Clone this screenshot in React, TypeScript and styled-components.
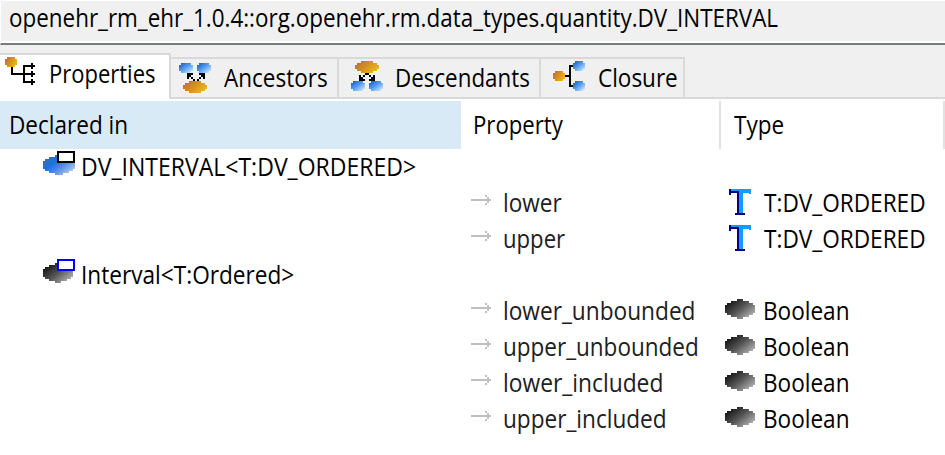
import React from "react";
import styled, { createGlobalStyle } from "styled-components";

const GlobalStyle = createGlobalStyle`
  *, *::before, *::after { box-sizing: border-box; }
  body { margin: 0; background: #fff; overflow: hidden; }
`;

const Window = styled.div`
  display: flex;
  flex-direction: column;
  width: 945px;
  height: 455px;
  background: #fff;
  color: #000;
  font: 25px/36px "Open Sans", "Noto Sans", sans-serif;
`;

/* Condensed label: the face is narrowed horizontally by $fit. */
const Label = styled.span<{ $fit: number }>`
  display: block;
  width: 0;
  white-space: pre;
  transform: scaleX(${(p) => p.$fit});
  transform-origin: left center;
`;

const TitleBar = styled.header`
  height: 45px;
  flex: none;
  padding: 0 0 0 8px;
  border-top: 1px solid #fff;
  border-left: 1px solid #fff;
  border-bottom: 2px solid #787c78;
  background: linear-gradient(#f0f0f0 40px, #fff 40px);
  line-height: 33px;
`;

const TabBar = styled.nav`
  display: flex;
  align-items: flex-end;
  flex: none;
  height: 54px;
  background: #f0f0f0;
  line-height: 33px;
`;

const ActiveTab = styled.div`
  display: flex;
  width: 171px;
  height: 46px;
  padding: 2px 0 0 5px;
  gap: 12px;
  background: #fff;
  border-top: 2px solid #d9d9d9;
  border-right: 2px solid #d9d9d9;
`;

const Tab = styled.div<{ $width: number; $gap: number; $pad: number }>`
  display: flex;
  width: ${(p) => p.$width}px;
  height: 42px;
  padding: 2px 0 0 ${(p) => p.$pad}px;
  gap: ${(p) => p.$gap}px;
  border: solid #d9d9d9;
  border-width: 2px 2px 2px 0;
`;

const TabFill = styled.div`
  flex: 1;
  height: 2px;
  background: #d9d9d9;
`;

const Table = styled.main`
  display: flex;
  flex-direction: column;
  padding-top: 2px;
`;

const Columns = styled.div`
  display: grid;
  grid-template-columns: 461px 260px 224px;
`;

const HeaderRow = styled(Columns)`
  height: 48px;
`;

const HeaderCell = styled.div<{ $active?: boolean; $pad: number; $line?: boolean }>`
  padding: 5px 0 0 ${(p) => p.$pad}px;
  background: ${(p) => (p.$active ? "#d9eaf7" : "#fff")};
  border-right: ${(p) => (p.$line ? "2px solid #e2e2e2" : "0")};
`;

const Row = styled(Columns)`
  height: 36px;
`;

const Cell = styled.div<{ $pad: number; $gap: number; $soft?: boolean }>`
  display: flex;
  height: 36px;
  padding-left: ${(p) => p.$pad}px;
  gap: ${(p) => p.$gap}px;
  color: ${(p) => (p.$soft ? "#202020" : "#000")};
  line-height: 34px;
`;

const Icon = styled.svg`
  display: block;
  flex: none;
  shape-rendering: crispEdges;
`;

type Tone = "amber" | "sky" | "ink" | "cobalt";

const Gradients = () => (
  <Icon width="0" height="0">
    <defs>
      <linearGradient id="amber" x1="0" y1="0" x2="1" y2="0.5">
        <stop offset="0" stopColor="#b9672b" />
        <stop offset="1" stopColor="#e9b41c" />
      </linearGradient>
      <linearGradient id="sky" x1="0" y1="0" x2="1" y2="1">
        <stop offset="0.1" stopColor="#1c62cc" />
        <stop offset="0.5" stopColor="#5ba0ee" />
        <stop offset="1" stopColor="#e2f4ff" />
      </linearGradient>
      <linearGradient id="ink" x1="0" y1="0.1" x2="1" y2="0.9">
        <stop offset="0.1" stopColor="#161616" />
        <stop offset="0.5" stopColor="#555" />
        <stop offset="1" stopColor="#c4c4c4" />
      </linearGradient>
      <linearGradient id="cobalt" x1="0" y1="0.1" x2="1" y2="0.9">
        <stop offset="0" stopColor="#3c6ca8" />
        <stop offset="0.35" stopColor="#1872e8" />
        <stop offset="0.55" stopColor="#4787df" />
        <stop offset="1" stopColor="#c9d7ef" />
      </linearGradient>
    </defs>
  </Icon>
);

/* Stepped ellipse; insets give the indent of every 2px row. */
const Blob = ({ x, y, w, insets, tone }: { x: number; y: number; w: number; insets: number[]; tone: Tone }) => {
  const left = insets.map((n, i) => `${x + n * 2},${y + i * 2} ${x + n * 2},${y + i * 2 + 2}`);
  const right = insets.map((n, i) => `${x + w - n * 2},${y + i * 2 + 2} ${x + w - n * 2},${y + i * 2}`).reverse();
  return <polygon points={[...left, ...right].join(" ")} fill={`url(#${tone})`} />;
};

const DOT = [1, 0, 0, 0, 1];
const OVAL = [3, 1, 0, 0, 1, 3];
const DISC = [6, 3, 1, 0, 0, 0, 0, 1, 3, 6];

const PropertiesIcon = () => (
  <Icon width="32" height="32">
    <path d="M6 10h2v6h10V8h8V6h2v2h2v2h-2v2h-2v-2h-6v6h6v-2h2v2h2v2h-2v2h-2v-2h-6v6h6v-2h2v2h2v2h-2v2h-2v-2h-8v-8H6z" />
    <Blob x={0} y={0} w={12} insets={DOT} tone="amber" />
  </Icon>
);

const AncestorsIcon = () => (
  <Icon width="32" height="34">
    <path d="M8 12h6v2h-2v2h2v2h2v2h2v-2h2v-2h2v-2h-2v-2h6v6h-2v-2h-2v2h-2v2h-6v-2h-2v-2h-2v2H8z" />
    <Blob x={0} y={2} w={14} insets={DOT} tone="sky" />
    <Blob x={18} y={2} w={14} insets={DOT} tone="sky" />
    <Blob x={4} y={20} w={24} insets={OVAL} tone="amber" />
  </Icon>
);

const DescendantsIcon = () => (
  <Icon width="32" height="34">
    <path d="M14 12h4v2h2v2h2v-2h2v6h-6v-2h2v-2h-2v-2h-4v2h-2v2h2v2H8v-6h2v2h2v-2h2z" />
    <Blob x={4} y={0} w={24} insets={OVAL} tone="amber" />
    <Blob x={0} y={20} w={14} insets={DOT} tone="sky" />
    <Blob x={18} y={20} w={14} insets={DOT} tone="sky" />
  </Icon>
);

const ClosureIcon = () => (
  <Icon width="32" height="34">
    <path d="M12 14h4V4h4v2h-2v18h2v2h-4V16h-4z" />
    <Blob x={0} y={10} w={12} insets={DOT} tone="amber" />
    <Blob x={20} y={0} w={12} insets={DOT} tone="sky" />
    <Blob x={20} y={20} w={12} insets={DOT} tone="sky" />
  </Icon>
);

const ClassIcon = ({ tone, frame }: { tone: Tone; frame: string }) => (
  <Icon width="32" height="28">
    <Blob x={0} y={6} w={tone === "cobalt" ? 32 : 30} insets={DISC} tone={tone} />
    <rect x="15" y="3" width="16" height="10" fill="#fff" stroke={frame} strokeWidth="2" />
  </Icon>
);

const TypeIcon = () => (
  <Icon width="30" height="36">
    <Blob x={0} y={6} w={30} insets={DISC} tone="ink" />
  </Icon>
);

const GenericIcon = () => (
  <Icon width="22" height="36">
    <path d="M2 4h20v5h-2V8h-6v20h-4V8H2z" fill="#129cff" />
    <path d="M0 4h2v2h8v22h6v2H6v-2h2V8H2v2H0z" fill="#000080" />
  </Icon>
);

const ArrowIcon = () => (
  <Icon width="20" height="36">
    <path d="M0 14h16v-2h-2v-2h2v2h2v2h2v2h-2v2h-2v2h-2v-2h2v-2H0z" fill="#bfbfbf" />
  </Icon>
);

interface PropertyItem {
  name: string;
  fit: number;
  type: "Boolean" | "T:DV_ORDERED";
}

const PropertyRow = ({ name, fit, type }: PropertyItem) => (
  <Row>
    <div />
    <Cell $pad={10} $gap={12} $soft>
      <ArrowIcon />
      <Label $fit={fit}>{name}</Label>
    </Cell>
    {type === "Boolean" ? (
      <Cell $pad={4} $gap={8}>
        <TypeIcon />
        <Label $fit={0.903}>{type}</Label>
      </Cell>
    ) : (
      <Cell $pad={8} $gap={13}>
        <GenericIcon />
        <Label $fit={0.904}>{type}</Label>
      </Cell>
    )}
  </Row>
);

const ordered: PropertyItem[] = [
  { name: "lower", fit: 0.903, type: "T:DV_ORDERED" },
  { name: "upper", fit: 0.885, type: "T:DV_ORDERED" },
];

const bounds: PropertyItem[] = [
  { name: "lower_unbounded", fit: 0.907, type: "Boolean" },
  { name: "upper_unbounded", fit: 0.9, type: "Boolean" },
  { name: "lower_included", fit: 0.912, type: "Boolean" },
  { name: "upper_included", fit: 0.904, type: "Boolean" },
];

export default function App() {
  return (
    <>
      <GlobalStyle />
      <Gradients />
      <Window>
        <TitleBar>
          <Label $fit={0.897}>openehr_rm_ehr_1.0.4::org.openehr.rm.data_types.quantity.DV_INTERVAL</Label>
        </TitleBar>
        <TabBar>
          <ActiveTab>
            <PropertiesIcon />
            <Label $fit={0.88}>Properties</Label>
          </ActiveTab>
          <Tab $width={168} $pad={8} $gap={13}>
            <AncestorsIcon />
            <Label $fit={0.9}>Ancestors</Label>
          </Tab>
          <Tab $width={202} $pad={12} $gap={12}>
            <DescendantsIcon />
            <Label $fit={0.894}>Descendants</Label>
          </Tab>
          <Tab $width={144} $pad={12} $gap={13}>
            <ClosureIcon />
            <Label $fit={0.9}>Closure</Label>
          </Tab>
          <TabFill />
        </TabBar>
        <Table>
          <HeaderRow>
            <HeaderCell $active $pad={9}>
              <Label $fit={0.902}>Declared in</Label>
            </HeaderCell>
            <HeaderCell $pad={12} $line>
              <Label $fit={0.886}>Property</Label>
            </HeaderCell>
            <HeaderCell $pad={13} $line>
              <Label $fit={0.9}>Type</Label>
            </HeaderCell>
          </HeaderRow>
          <Row>
            <Cell $pad={43} $gap={6}>
              <ClassIcon tone="cobalt" frame="#000" />
              <Label $fit={0.921}>{"DV_INTERVAL<T:DV_ORDERED>"}</Label>
            </Cell>
          </Row>
          {ordered.map((item) => (
            <PropertyRow key={item.name} {...item} />
          ))}
          <Row>
            <Cell $pad={43} $gap={6}>
              <ClassIcon tone="ink" frame="#00f" />
              <Label $fit={0.905}>{"Interval<T:Ordered>"}</Label>
            </Cell>
          </Row>
          {bounds.map((item) => (
            <PropertyRow key={item.name} {...item} />
          ))}
        </Table>
      </Window>
    </>
  );
}
